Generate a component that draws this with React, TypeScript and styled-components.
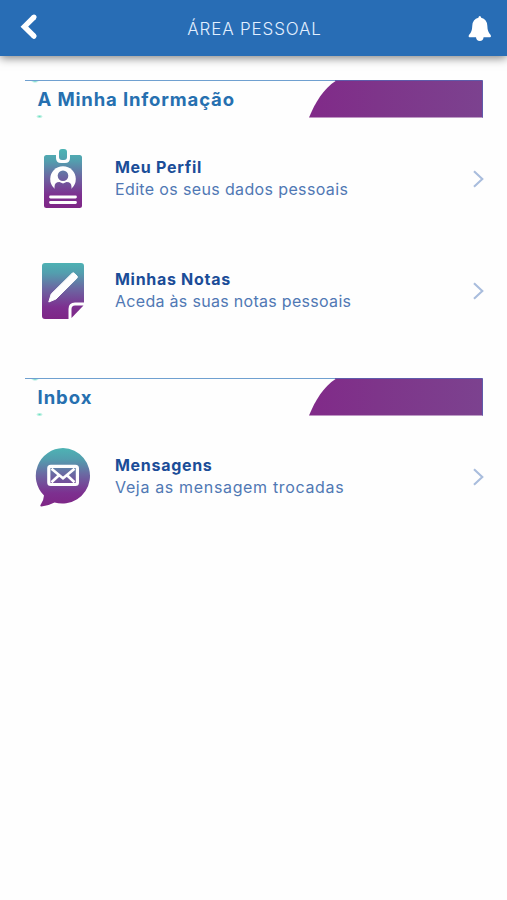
import React from "react";
import styled, { createGlobalStyle } from "styled-components";

const GlobalStyle = createGlobalStyle`
  * { box-sizing: border-box; }
  body { margin: 0; background: #fefefe; font-family: Inter, "Open Sans", sans-serif; }
`;

const Screen = styled.div`
  width: 100%;
  min-height: 900px;
  overflow: hidden;
`;

const Header = styled.header`
  display: grid;
  grid-template-columns: 56px 1fr 56px;
  align-items: center;
  height: 56px;
  background: #286db5;
  box-shadow: 0 2px 9px rgba(0, 0, 0, 0.5);
`;

const HeaderTitle = styled.h1`
  margin: 2px 0 0 2px;
  text-align: center;
  font-size: 17px;
  font-weight: 300;
  line-height: 20px;
  letter-spacing: 0.85px;
  color: #e2efff;
`;

const HeaderButton = styled.button`
  display: block;
  width: 56px;
  height: 56px;
  padding: 0;
  border: 0;
  background: none;
  svg { display: block; }
`;

const Section = styled.section`
  padding-top: 24px;
  & + & { padding-top: 36px; }
`;

const Banner = styled.div`
  display: flex;
  justify-content: space-between;
  width: 459px;
  height: 38px;
  margin-left: 25px;
`;

const BannerTitle = styled.h2<{ $spacing: number }>`
  flex: 1;
  margin: 0;
  padding-left: 12.5px;
  border-top: 1px solid #6fa0d0;
  font-size: 18.5px;
  font-weight: 700;
  line-height: 36px;
  letter-spacing: ${(p) => p.$spacing}px;
  color: #2670b0;
  background:
    radial-gradient(ellipse 4px 2px at 10px 0, #5fd6c2, transparent),
    radial-gradient(ellipse 3.5px 2px at 14.5px 35.5px, #6be0c0, transparent);
`;

const BannerArt = styled.svg`
  display: block;
  width: 175px;
  height: 38px;
`;

const Row = styled.a<{ $height: number }>`
  display: grid;
  grid-template-columns: 115px 1fr 48px;
  align-items: center;
  height: ${(p) => p.$height}px;
  color: inherit;
  text-decoration: none;
`;

const RowIcon = styled.svg`
  display: block;
  width: 60px;
  height: 64px;
  margin-left: 33px;
`;

const RowText = styled.div`
  display: flex;
  flex-direction: column;
  white-space: nowrap;
`;

const RowTitle = styled.span<{ $spacing: number }>`
  font-size: 16px;
  font-weight: 700;
  line-height: 21px;
  letter-spacing: ${(p) => p.$spacing}px;
  color: #1b4d98;
`;

const RowDetail = styled.span<{ $spacing: number }>`
  font-size: 16px;
  font-weight: 400;
  line-height: 22px;
  letter-spacing: ${(p) => p.$spacing}px;
  color: #5078b4;
`;

const Chevron = styled.svg`
  display: block;
  width: 14px;
  height: 20px;
  margin-left: 12px;
`;

function SectionBanner({ title, spacing }: { title: string; spacing: number }) {
  return (
    <Banner>
      <BannerTitle $spacing={spacing}>{title}</BannerTitle>
      <BannerArt viewBox="0 0 175 38">
        <defs>
          <linearGradient id="banner">
            <stop offset="0" stopColor="#812a89" />
            <stop offset="0.4" stopColor="#7e358a" />
            <stop offset="1" stopColor="#7c428f" />
          </linearGradient>
        </defs>
        <path d="M0 37.5C6 23 14 9 27 .7H174V37.5Z" fill="url(#banner)" />
        <path d="M0 .5H26" stroke="#6fa0d0" />
        <path d="M26 .5H173.5V37.5" fill="none" stroke="#5f5baa" />
      </BannerArt>
    </Banner>
  );
}

function Shade({ id }: { id: string }) {
  return (
    <defs>
      <linearGradient id={id} x1="0" y1="0" x2="0" y2="64" gradientUnits="userSpaceOnUse">
        <stop offset="0.05" stopColor="#4db3b4" />
        <stop offset="0.22" stopColor="#539eae" />
        <stop offset="0.46" stopColor="#6b68a2" />
        <stop offset="0.75" stopColor="#7d3090" />
        <stop offset="1" stopColor="#7f2383" />
      </linearGradient>
    </defs>
  );
}

function BadgeIcon() {
  return (
    <RowIcon viewBox="0 0 60 64">
      <Shade id="badge" />
      <rect x="11" y="8" width="38" height="53" rx="2.5" fill="url(#badge)" />
      <path d="M23 5H37V11Q37 16 32 16H28Q23 16 23 11Z" fill="#fefefe" />
      <rect x="26" y="2" width="8" height="11" rx="3" fill="url(#badge)" />
      <circle cx="30" cy="32" r="12.8" fill="#fefefe" />
      <circle cx="30" cy="28.7" r="5.3" fill="url(#badge)" />
      <path d="M21.5 45V40Q21.5 35 26.5 35L30 36.4L33.5 35Q38.5 35 38.5 40V45Z" fill="url(#badge)" />
      <path d="M17.5 50H42.5M17.5 55.5H42.5" stroke="#fefefe" strokeWidth="2.8" strokeLinecap="round" />
    </RowIcon>
  );
}

function NoteIcon() {
  return (
    <RowIcon viewBox="0 0 60 64">
      <Shade id="note" />
      <path d="M12 4H48Q51 4 51 7V43.5H42Q35.5 43.5 35.5 50V60H12Q9 60 9 57V7Q9 4 12 4Z" fill="url(#note)" />
      <path d="M38.5 59V50Q38.5 46.5 42 46.5H50.5Z" fill="url(#note)" />
      <path d="M15.8 43L18.2 35L39 14.4Q40.3 13.2 41.4 14.3L44 17Q45 18.1 43.8 19.3L23 40Z" fill="#fefefe" stroke="#fefefe" strokeWidth="1" strokeLinejoin="round" />
    </RowIcon>
  );
}

function MessageIcon() {
  return (
    <RowIcon viewBox="0 0 60 64">
      <Shade id="message" />
      <path d="M30 3A27.8 27.8 0 1 1 21.5 57.5Q15 61 8.5 61.5Q6.8 61.5 7.5 60Q10.8 55.5 11 50.5A27.8 27.8 0 0 1 30 3Z" fill="url(#message)" />
      <rect x="15.8" y="21.3" width="28.6" height="18.2" rx="2" fill="none" stroke="#fefefe" strokeWidth="3.2" />
      <path d="M18.5 23.8L30 33.3L41.5 23.8M18.5 37.3L26 30.3M41.5 37.3L34 30.3" fill="none" stroke="#fefefe" strokeWidth="2.6" />
    </RowIcon>
  );
}

interface ItemProps {
  icon: React.ReactNode;
  title: string;
  detail: string;
  titleSpacing: number;
  detailSpacing: number;
  height: number;
}

function Item({ icon, title, detail, titleSpacing, detailSpacing, height }: ItemProps) {
  return (
    <Row $height={height}>
      {icon}
      <RowText>
        <RowTitle $spacing={titleSpacing}>{title}</RowTitle>
        <RowDetail $spacing={detailSpacing}>{detail}</RowDetail>
      </RowText>
      <Chevron viewBox="0 0 14 20">
        <path d="M3 2.2L11.3 10L3 17.8" fill="none" stroke="#a9bddd" strokeWidth="2.1" />
      </Chevron>
    </Row>
  );
}

export default function App() {
  return (
    <Screen>
      <GlobalStyle />
      <Header>
        <HeaderButton aria-label="Voltar">
          <svg width="56" height="56" viewBox="0 0 56 56">
            <path d="M34 17.2L24.4 26.7L34 36.2" fill="none" stroke="#fff" strokeWidth="5.4" />
            <path d="M33.8 17.4L34 17.2M33.8 36L34 36.2" stroke="#fff" strokeWidth="5.2" strokeLinecap="round" />
          </svg>
        </HeaderButton>
        <HeaderTitle>ÁREA PESSOAL</HeaderTitle>
        <HeaderButton aria-label="Notificações">
          <svg width="56" height="56" viewBox="0 0 56 56">
            <path d="M28.8 16Q30 16 30.2 17.8Q36 19.5 36.3 25.5Q36.5 32 39.3 34.5Q40.8 36.8 39 37.2H18.6Q16.8 36.8 18.3 34.5Q21.1 32 21.3 25.5Q21.6 19.5 27.4 17.8Q27.6 16 28.8 16Z" fill="#fff" />
            <path d="M25 37H32.6Q32.3 41 28.8 41Q25.3 41 25 37Z" fill="#fff" />
          </svg>
        </HeaderButton>
      </Header>
      <Section>
        <SectionBanner title="A Minha Informação" spacing={0.85} />
        <Item icon={<BadgeIcon />} title="Meu Perfil" detail="Edite os seus dados pessoais" titleSpacing={0.7} detailSpacing={0.36} height={121} />
        <Item icon={<NoteIcon />} title="Minhas Notas" detail="Aceda às suas notas pessoais" titleSpacing={0.7} detailSpacing={0.3} height={103} />
      </Section>
      <Section>
        <SectionBanner title="Inbox" spacing={0.95} />
        <Item icon={<MessageIcon />} title="Mensagens" detail="Veja as mensagem trocadas" titleSpacing={0.7} detailSpacing={0.66} height={121} />
      </Section>
    </Screen>
  );
}
